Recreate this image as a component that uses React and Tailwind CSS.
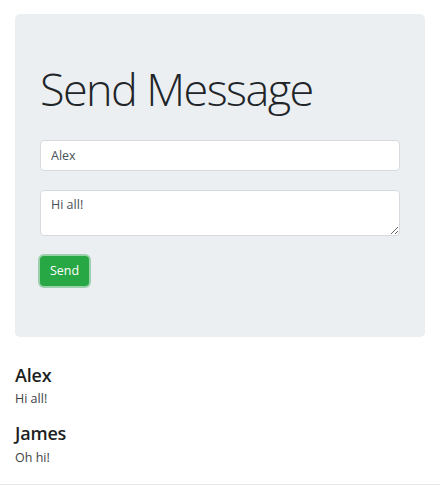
export default function App() {
  const messages = [
    { name: "Alex", text: "Hi all!" },
    { name: "James", text: "Oh hi!" }
  ];

  return (
    <div className="h-[485px] w-[440px] bg-white font-['Open_Sans',sans-serif] text-[#212529]">
      <div className="px-[15px] pt-[14px]">
        <div className="rounded-[5px] bg-[#eceff2] px-[25px] pt-[48px] pb-[51px]">
          <h1 className="text-[45px] leading-[1.22] font-light tracking-[-1.6px] text-[#212529]">Send Message</h1>
          <form className="mt-[23px]" onSubmit={(e) => e.preventDefault()}>
            <input
              className="block h-[31px] w-full rounded-[4px] border border-[#d6dadf] bg-white px-[10px] text-[12.5px] text-[#495057] outline-none"
              defaultValue="Alex"
            />
            <textarea
              className="mt-[19px] block h-[46px] w-full rounded-[4px] border border-[#d6dadf] bg-white px-[10px] py-[5px] text-[12.5px] leading-[1.5] text-[#495057] outline-none"
              defaultValue="Hi all!"
            />
            <button
              className="mt-[20px] h-[30px] rounded-[4px] bg-[#28a745] px-[10px] text-[12.5px] font-medium text-white shadow-[0_0_0_2px_rgba(72,180,97,0.5)]"
              type="submit"
            >
              Send
            </button>
          </form>
        </div>

        <div className="mt-[28px]">
          {messages.map((m, i) => (
            <div className={i > 0 ? "mt-[14px]" : ""} key={m.name}>
              <h5 className="text-[18px] leading-[1.2] font-semibold tracking-[-0.2px] text-[#1c1f22]">{m.name}</h5>
              <p className="mt-[4px] text-[12.5px] leading-[1.5] text-[#3d4247]">{m.text}</p>
            </div>
          ))}
        </div>
      </div>
      <div className="mt-[16px] border-t border-[#e5e7e9]" />
    </div>
  );
}
